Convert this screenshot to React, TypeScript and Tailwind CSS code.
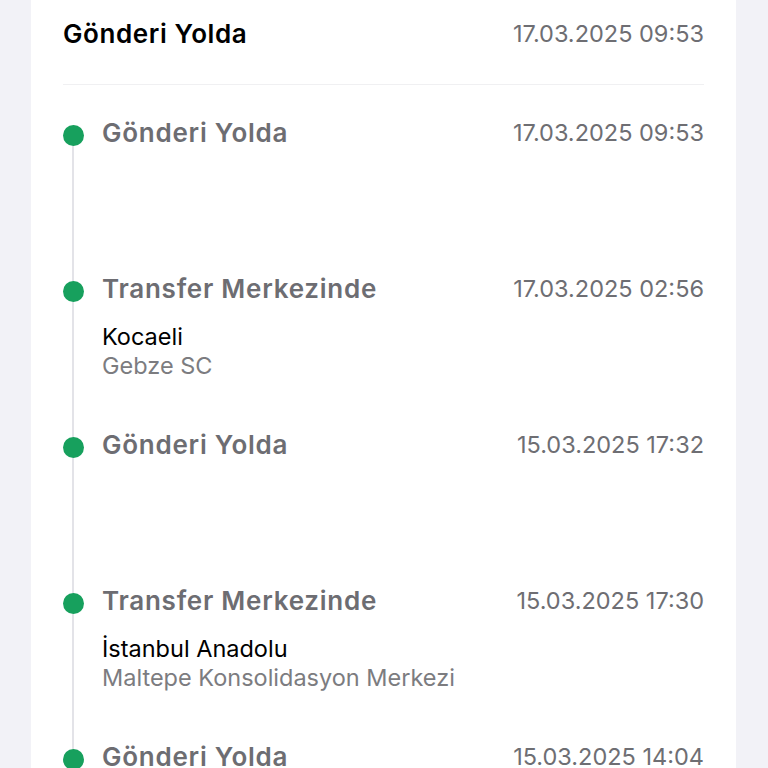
import React from "react";

type Item = { title: string; date: string; city?: string; place?: string };

const items: Item[] = [
  { title: "Gönderi Yolda", date: "17.03.2025 09:53" },
  { title: "Transfer Merkezinde", date: "17.03.2025 02:56", city: "Kocaeli", place: "Gebze SC" },
  { title: "Gönderi Yolda", date: "15.03.2025 17:32" },
  { title: "Transfer Merkezinde", date: "15.03.2025 17:30", city: "İstanbul Anadolu", place: "Maltepe Konsolidasyon Merkezi" },
  { title: "Gönderi Yolda", date: "15.03.2025 14:04" },
];

export default function App() {
  return (
    <div
      className="w-full h-[768px] overflow-hidden bg-[#f2f2f7]"
      style={{ fontFamily: "Inter, 'Noto Sans', 'Liberation Sans', sans-serif" }}
    >
      <div className="ml-[31px] w-[705px] h-full bg-white px-[32px]">
        <div className="flex items-center justify-between pt-[18px] pb-[34px] border-b border-[#f0f0f2]">
          <div className="text-[26px] leading-[32px] font-semibold text-black tracking-[0.6px]">Gönderi Yolda</div>
          <div className="text-[23.5px] leading-[32px] text-[#6e6e73]">17.03.2025 09:53</div>
        </div>
        <div className="relative pt-[32px]">
          <div className="absolute left-[9px] top-[51px] bottom-0 w-[2px] bg-[#e3e3e8]" />
          {items.map((it, i) => (
            <div key={i} className="flex h-[156px]">
              <div className="w-[39px] shrink-0 pt-[8px]">
                <div className="relative w-[21px] h-[21px] rounded-full bg-[#17a05d]" />
              </div>
              <div className="flex-1 min-w-0">
                <div className="flex items-center justify-between">
                  <div className="text-[26px] leading-[32px] font-semibold text-[#6d6d72] tracking-[0.75px]">{it.title}</div>
                  <div className="text-[23.5px] leading-[32px] text-[#6e6e73]">{it.date}</div>
                </div>
                {it.city && (
                  <div className="mt-[17px]">
                    <div className="text-[23.5px] leading-[29px] text-black">{it.city}</div>
                    <div className="text-[23.5px] leading-[29px] text-[#7c7c80]">{it.place}</div>
                  </div>
                )}
              </div>
            </div>
          ))}
        </div>
      </div>
    </div>
  );
}
